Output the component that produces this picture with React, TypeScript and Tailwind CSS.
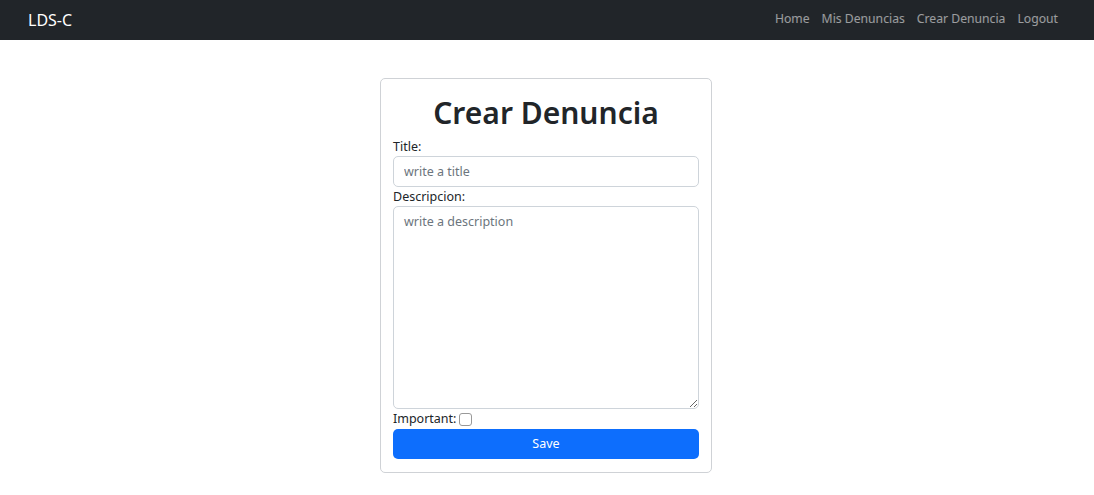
import React from 'react';

export default function App() {
  return (
    <div className="min-h-screen bg-white text-[#212529]" style={{ fontFamily: '"Noto Sans", "Open Sans", sans-serif' }}>
      <nav className="h-[40px] bg-[#212529] flex items-center justify-between pl-[28px] pr-[36px]">
        <span className="text-white text-[16px] leading-none">LDS-C</span>
        <div className="flex items-center gap-[12px] text-[12.2px] text-white/55 pb-[2px]">
          <span>Home</span>
          <span>Mis Denuncias</span>
          <span>Crear Denuncia</span>
          <span>Logout</span>
        </div>
      </nav>

      <div className="flex justify-center pt-[38px] pr-[2px]">
        <div className="w-[332px] border border-[#cfd2d6] rounded-[5px] px-[12px] pt-[14px] pb-[13px]">
          <h1 className="text-center text-[30px] font-semibold leading-[40px] mb-[5px]">Crear Denuncia</h1>
          <form className="flex flex-col text-[12.5px]">
            <label className="leading-[18px]">Title:</label>
            <input
              className="h-[31px] border border-[#ced4da] rounded-[5px] px-[10px] text-[12.5px] placeholder:text-[#6c757d] outline-none"
              placeholder="write a title"
            />
            <label className="leading-[18px] mt-[1px]">Descripcion:</label>
            <textarea
              className="h-[203px] border border-[#ced4da] rounded-[5px] px-[10px] py-[6px] text-[12.5px] placeholder:text-[#6c757d] outline-none"
              placeholder="write a description"
            />
            <div className="flex items-center gap-[3px] leading-[20px]">
              <span>Important:</span>
              <span className="w-[13px] h-[13px] border border-[#999] rounded-[3px] bg-white inline-block" />
            </div>
            <button type="button" className="h-[30px] bg-[#0d6efd] text-white rounded-[5px] text-[12.5px]">
              Save
            </button>
          </form>
        </div>
      </div>
    </div>
  );
}
